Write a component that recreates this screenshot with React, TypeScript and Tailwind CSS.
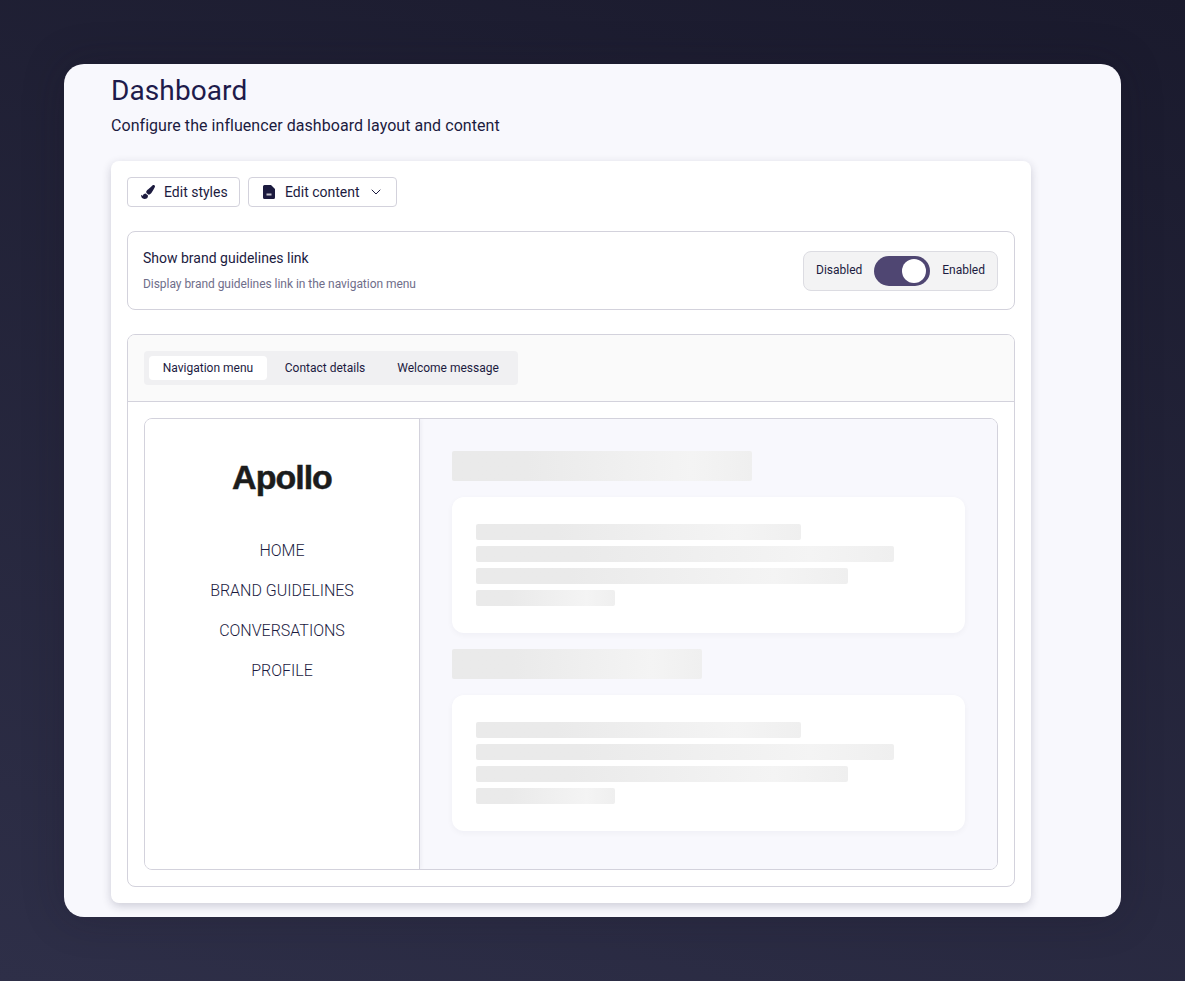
import { ChevronDown } from 'lucide-react';
import { FaPaintBrush } from 'react-icons/fa';

function Skeleton({ className }: { className: string }) {
  return <div className={`rounded-[2px] bg-gradient-to-r from-[#eaeaea] from-25% via-[#f4f4f4] via-80% to-[#efefef] ${className}`} />;
}

function ContentBlock({ titleWidth }: { titleWidth: string }) {
  return (
    <div className="flex flex-col gap-4">
      <Skeleton className={`h-[30px] ${titleWidth}`} />
      <div className="flex h-[136px] w-[513px] flex-col gap-[6px] rounded-xl bg-white px-6 pt-[27px] shadow-[0_2px_6px_rgba(30,30,60,0.04)]">
        <Skeleton className="h-4 w-[325px]" />
        <Skeleton className="h-4 w-[418px]" />
        <Skeleton className="h-4 w-[372px]" />
        <Skeleton className="h-4 w-[139px]" />
      </div>
    </div>
  );
}

export default function App() {
  return (
    <div className="flex h-[981px] w-full bg-[linear-gradient(195deg,#1a1a2d,#2e2f48)] pt-16 pl-16 font-['Roboto',sans-serif] text-[#1c1b3f]">
      <div className="h-[853px] w-[1057px] rounded-[20px] bg-[#f8f8fd] pl-[47px] pt-[9px] shadow-[0_0_40px_rgba(25,20,35,0.25)]">
        <h1 className="text-[28px] leading-[36px] tracking-[0.1px] text-[#1e1b4b]">Dashboard</h1>
        <p className="mt-[5px] text-base leading-6 tracking-[0.05px]">Configure the influencer dashboard layout and content</p>

        {/* Main panel */}
        <div className="mt-[23px] h-[742px] w-[920px] rounded-lg bg-white p-4 shadow-[0_3px_10px_rgba(30,30,60,0.2)]">
          <div className="flex gap-2">
            <button className="flex h-[30px] w-[113px] items-center rounded border border-[#d3d2dc] pl-[13px] text-sm">
              <FaPaintBrush className="mr-[9px] h-[14px] w-[14px]" /> Edit styles
            </button>
            <button className="flex h-[30px] w-[149px] items-center rounded border border-[#d3d2dc] pl-[14px] text-sm">
              <svg viewBox="0 0 12 14" className="mr-[10px] h-[14px] w-3" fill="#1c1b3f">
                <path d="M1.5 0H8l4 4v8.5a1.5 1.5 0 0 1-1.5 1.5h-9A1.5 1.5 0 0 1 0 12.5v-11A1.5 1.5 0 0 1 1.5 0Z" />
                <rect x="3.5" y="8.5" width="5" height="2" fill="#fff" fillOpacity="0.75" />
              </svg>
              Edit content
              <ChevronDown className="ml-2 h-4 w-4" strokeWidth={1.5} />
            </button>
          </div>

          {/* Toggle row */}
          <div className="mt-6 flex h-[79px] items-center justify-between rounded-lg border border-[#d3d2dc] pl-[15px] pr-4">
            <div>
              <div className="text-sm leading-5">Show brand guidelines link</div>
              <div className="mt-2 mb-[2px] text-xs leading-4 tracking-[-0.04px] text-[#6f6e8a]">Display brand guidelines link in the navigation menu</div>
            </div>
            <div className="flex h-10 w-[195px] items-center justify-between rounded-lg border border-[#dcdce2] bg-[#f3f3f4] px-3 text-xs">
              <span className="pb-[2px]">Disabled</span>
              <span className="flex h-[30px] w-14 items-center justify-end rounded-full bg-[#4f4672] pr-1">
                <span className="h-6 w-6 rounded-full bg-white" />
              </span>
              <span className="pb-[2px]">Enabled</span>
            </div>
          </div>

          {/* Preview */}
          <div className="mt-6 h-[553px] overflow-hidden rounded-lg border border-[#d3d2dc]">
            <div className="h-[67px] border-b border-[#d3d2dc] bg-[#fafafa] pl-4 pt-4">
              <div className="flex h-[34px] w-[374px] items-center gap-1 rounded bg-[#f0f0f2] pl-[5px] text-xs">
                <span className="flex h-6 w-[118px] items-center justify-center rounded bg-white">Navigation menu</span>
                <span className="flex h-6 w-[108px] items-center justify-center">Contact details</span>
                <span className="flex h-6 w-[130px] items-center justify-center">Welcome message</span>
              </div>
            </div>
            <div className="p-4">
              <div className="flex h-[452px] overflow-hidden rounded-lg border border-[#d3d2dc]">
                <div className="relative flex w-[275px] flex-col items-center border-r border-[#d3d2dc] bg-white pt-[36px] shadow-[1px_0_4px_rgba(30,30,60,0.06)]">
                  <div className="font-['Liberation_Sans',sans-serif] text-[34px] font-bold leading-[44px] tracking-[-1px] text-[#1c1c1c] [-webkit-text-stroke:0.5px_#1c1c1c]">Apollo</div>
                  <nav className="mt-[40px] flex flex-col items-center gap-4 text-base font-light leading-6">
                    <span>HOME</span>
                    <span>BRAND GUIDELINES</span>
                    <span>CONVERSATIONS</span>
                    <span>PROFILE</span>
                  </nav>
                </div>
                <div className="flex flex-1 flex-col gap-4 bg-[#f8f8fd] pl-8 pt-8">
                  <ContentBlock titleWidth="w-[300px]" />
                  <ContentBlock titleWidth="w-[250px]" />
                </div>
              </div>
            </div>
          </div>
        </div>
      </div>
    </div>
  );
}
